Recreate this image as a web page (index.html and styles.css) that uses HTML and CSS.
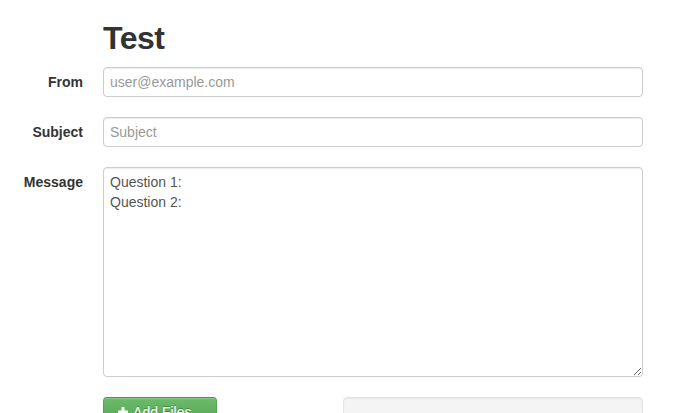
FILE: index.html
```html
<!DOCTYPE html>
<html lang="en">
<head>
<meta charset="utf-8">
<title>Test</title>
<link rel="stylesheet" href="styles.css">
</head>
<body>
<main class="page">
  <div class="row title-row">
    <h2 class="title">Test</h2>
  </div>
  <form class="form">
    <div class="row">
      <label class="label" for="from">From</label>
      <input class="field" id="from" type="text" placeholder="user@example.com">
    </div>
    <div class="row">
      <label class="label" for="subject">Subject</label>
      <input class="field" id="subject" type="text" placeholder="Subject">
    </div>
    <div class="row">
      <label class="label" for="message">Message</label>
      <textarea class="field area" id="message">Question 1:
Question 2:</textarea>
    </div>
    <div class="row">
      <div></div>
      <div class="actions">
        <span class="btn btn-success"><svg class="icon-plus" width="14" height="14" viewBox="0 0 14 14" aria-hidden="true"><path d="M5.5 2h3v3.5H12v3H8.5V12h-3V8.5H2v-3h3.5z" fill="#fff"/></svg> Add Files...</span>
        <div class="progress"></div>
      </div>
    </div>
  </form>
</main>
</body>
</html>
```
FILE: styles.css
```css
html, body {
  margin: 0;
  padding: 0;
  background: #fff;
}
body {
  font-family: "Liberation Sans", Arial, sans-serif;
  font-size: 14px;
  line-height: 20px;
  color: #333;
  overflow: hidden;
}
.page {
  padding-top: 18px;
}
.row {
  display: grid;
  grid-template-columns: 83px 540px;
  column-gap: 20px;
  margin-bottom: 20px;
}
.title-row {
  margin-bottom: 9px;
}
.title {
  grid-column: 2;
  margin: 0;
  font-size: 32px;
  line-height: 40px;
  font-weight: bold;
  letter-spacing: -0.5px;
  color: #333;
}
.label {
  padding-top: 5px;
  text-align: right;
  font-weight: bold;
  color: #333;
}
.field {
  box-sizing: border-box;
  width: 540px;
  height: 30px;
  margin: 0;
  padding: 4px 6px;
  font-family: "Liberation Sans", Arial, sans-serif;
  font-size: 14px;
  line-height: 20px;
  color: #555;
  background: #fff;
  border: 1px solid #ccc;
  border-radius: 4px;
  box-shadow: inset 0 1px 1px rgba(0,0,0,0.075);
  outline: none;
}
.field::placeholder {
  color: #999;
}
.area {
  height: 210px;
  resize: both;
  display: block;
}
.actions {
  display: flex;
  align-items: flex-start;
  justify-content: space-between;
}
.btn {
  display: inline-block;
  box-sizing: border-box;
  width: 114px;
  padding: 4px 12px;
  font-size: 14px;
  line-height: 20px;
  color: #fff;
  text-shadow: 0 -1px 0 rgba(0,0,0,0.25);
  border: 1px solid;
  border-color: rgba(0,0,0,0.1) rgba(0,0,0,0.1) rgba(0,0,0,0.25);
  border-radius: 4px;
  white-space: nowrap;
  box-shadow: inset 0 1px 0 rgba(255,255,255,0.2), 0 1px 2px rgba(0,0,0,0.05);
}
.btn-success {
  background-color: #5bb75b;
  background-image: linear-gradient(to bottom, #6cba6a, #52a452);
}
.icon-plus {
  vertical-align: text-top;
  margin-top: 1px;
}
.progress {
  box-sizing: border-box;
  width: 300px;
  height: 40px;
  background: #f4f4f4;
  border: 1px solid #e3e3e3;
  border-radius: 4px;
  box-shadow: inset 0 1px 1px rgba(0,0,0,0.05);
}
```
